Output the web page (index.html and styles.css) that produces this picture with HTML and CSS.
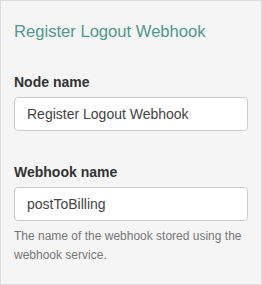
FILE: index.html
```html
<!DOCTYPE html>
<html lang="en">
<head>
    <meta charset="UTF-8">
    <title>Register Logout Webhook</title>
    <link rel="stylesheet" href="styles.css">
</head>
<body>
    <div class="panel">
        <h3 class="panel-title">Register Logout Webhook</h3>

        <div class="form-group">
            <label class="label" for="nodeName">Node name</label>
            <input class="input" id="nodeName" type="text" value="Register Logout Webhook">
        </div>

        <div class="form-group">
            <label class="label" for="webhookName">Webhook name</label>
            <input class="input" id="webhookName" type="text" value="postToBilling">
            <p class="help">The name of the webhook stored using the webhook service.</p>
        </div>
    </div>
</body>
</html>
```

FILE: styles.css
```css
* {
    margin: 0;
    padding: 0;
    box-sizing: border-box;
}

body {
    font-family: 'Liberation Sans', Arial, sans-serif;
    color: #333;
}

.panel {
    width: 262px;
    height: 285px;
    background: #f5f5f5;
    border: 1px solid #dcdcdc;
    padding: 21px 13px 0;
}

.panel-title {
    font-size: 16.6px;
    font-weight: normal;
    line-height: 20px;
    color: #4f9a8b;
}

.form-group {
    margin-top: 30px;
}

.form-group + .form-group {
    margin-top: 31px;
}

.label {
    display: block;
    font-size: 14px;
    font-weight: bold;
    line-height: 20px;
    margin-bottom: 5px;
}

.input {
    display: block;
    width: 100%;
    height: 34px;
    padding: 0 12px;
    border: 1px solid #ccc;
    border-radius: 4px;
    background: #fff;
    font-family: inherit;
    font-size: 14px;
    color: #444;
}

.help {
    margin-top: 6px;
    font-size: 12px;
    line-height: 19px;
    color: #777;
}
```
